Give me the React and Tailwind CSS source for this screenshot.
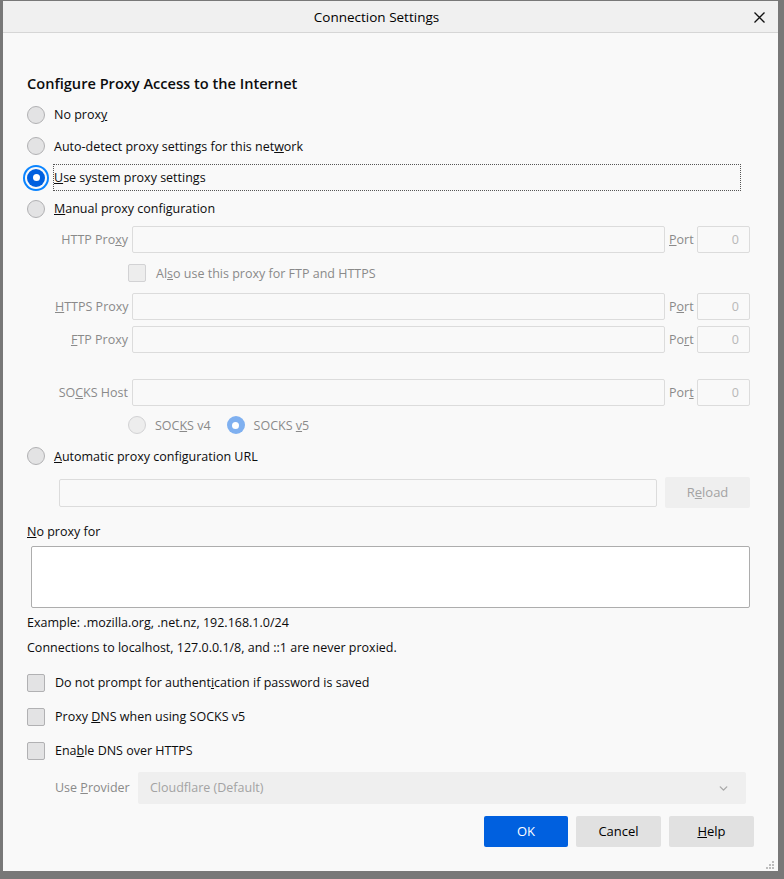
import { ChevronDown } from 'lucide-react';

const font = { fontFamily: '"Open Sans", "Noto Sans", sans-serif' };

function Radio({ checked, disabled, focused }) {
  if (checked && focused) {
    return (
      <div className="w-[18px] h-[18px] shrink-0 rounded-full bg-[#0060df] flex items-center justify-center shadow-[0_0_0_2px_#f9f9f9,0_0_0_4px_#0a84ff]">
        <div className="w-[7px] h-[7px] rounded-full bg-white" />
      </div>
    );
  }
  if (checked) {
    return (
      <div className={`w-[18px] h-[18px] shrink-0 rounded-full flex items-center justify-center ${disabled ? 'bg-[#7fb0f0]' : 'bg-[#0060df]'}`}>
        <div className="w-[7px] h-[7px] rounded-full bg-white" />
      </div>
    );
  }
  return (
    <div className={`w-[18px] h-[18px] shrink-0 rounded-full border ${disabled ? 'border-[#d2d2d4] bg-[#ededed]' : 'border-[#b1b1b3] bg-[#e3e3e4]'}`} />
  );
}

function Checkbox({ disabled }) {
  return (
    <div className={`w-[18px] h-[18px] shrink-0 rounded-[2px] border ${disabled ? 'border-[#d2d2d4] bg-[#ededed]' : 'border-[#b1b1b3] bg-[#e3e3e4]'}`} />
  );
}

function ProxyRow({ label, port, className = '' }) {
  return (
    <div className={`flex items-center h-[27px] ${className}`}>
      <div className="w-[73px] ml-[28px] pt-[2px] text-right text-[#8a8a8a] whitespace-nowrap">{label}</div>
      <div className="ml-[4px] w-[533px] h-[27px] border border-[#dcdcdc] rounded-[2px] bg-[#f9f9f9]" />
      <div className="ml-[4px] w-[28px] pt-[2px] text-[#8a8a8a]">{port}</div>
      <div className="w-[53px] h-[27px] border border-[#dcdcdc] rounded-[2px] flex items-center justify-end pr-[10px] pt-[1px] text-[#b8b8b8]">0</div>
    </div>
  );
}

export default function App() {
  return (
    <div className="w-[784px] h-[879px] bg-[#787878] overflow-hidden text-[12.5px] text-[#0c0c0d]" style={font}>
      <div className="ml-[3px] mt-[1px] w-[775px] h-[870px] bg-[#f9f9f9] flex flex-col relative">

        {/* title bar */}
        <div className="h-[32px] shrink-0 bg-[#f0f0f0] border-b border-[#d6d6d6] flex items-center justify-center pr-[28px] relative">
          <span className="text-[13.5px] text-black pt-[1px]">Connection Settings</span>
          <svg className="absolute right-[13px] top-[11px]" width="11" height="11" viewBox="0 0 11 11">
            <path d="M0.5 0.5 L10.5 10.5 M10.5 0.5 L0.5 10.5" stroke="#111" strokeWidth="1.3" />
          </svg>
        </div>

        <div className="flex flex-col pl-[24px] pr-[24px]">
          <div className="mt-[41px] h-[20px] flex items-center text-[14.6px] font-semibold">Configure Proxy Access to the Internet</div>

          <div className="mt-[5px] h-[31px] flex items-center gap-[9px]">
            <Radio />
            <span className="pt-[2px]">No prox<u>y</u></span>
          </div>
          <div className="h-[32px] flex items-center gap-[9px]">
            <Radio />
            <span className="pt-[2px]">Auto-detect proxy settings for this net<u>w</u>ork</span>
          </div>
          <div className="h-[31px] flex items-center gap-[8px]">
            <Radio checked focused />
            <div className="flex-1 mr-[13px] h-[27px] border border-dotted border-[#555] flex items-center">
              <span className="pt-[2px]"><u>U</u>se system proxy settings</span>
            </div>
          </div>
          <div className="h-[31px] flex items-center gap-[9px]">
            <Radio />
            <span className="pt-[2px]"><u>M</u>anual proxy configuration</span>
          </div>

          <ProxyRow className="mt-[2px]" label={<>HTTP Pro<u>x</u>y</>} port={<><u>P</u>ort</>} />

          <div className="h-[40px] flex items-center pl-[101px] gap-[10px] text-[#8a8a8a]">
            <Checkbox disabled />
            <span className="pt-[2px]">Al<u>s</u>o use this proxy for FTP and HTTPS</span>
          </div>

          <ProxyRow label={<><u>H</u>TTPS Proxy</>} port={<>P<u>o</u>rt</>} />
          <ProxyRow className="mt-[6px]" label={<><u>F</u>TP Proxy</>} port={<>Po<u>r</u>t</>} />
          <ProxyRow className="mt-[26px]" label={<>SO<u>C</u>KS Host</>} port={<>Por<u>t</u></>} />

          <div className="mt-[3px] h-[32px] flex items-center pl-[101px] text-[#8a8a8a]">
            <Radio disabled />
            <span className="ml-[9px] pt-[2px]">SOC<u>K</u>S v4</span>
            <div className="ml-[16px]"><Radio checked disabled /></div>
            <span className="ml-[9px] pt-[2px]">SOCKS <u>v</u>5</span>
          </div>

          <div className="h-[30px] flex items-center gap-[9px]">
            <Radio />
            <span className="pt-[2px]"><u>A</u>utomatic proxy configuration URL</span>
          </div>

          <div className="mt-[6px] h-[31px] flex items-center pl-[32px]">
            <div className="w-[598px] h-[28px] border border-[#dcdcdc] rounded-[2px]" />
            <div className="ml-[8px] w-[85px] h-[31px] rounded-[2px] bg-[#efefef] flex items-center justify-center pt-[1px] text-[#a3a3a3] text-[13px]">R<u>e</u>load</div>
          </div>

          <div className="mt-[14px] h-[20px] flex items-center"><span className="pt-[1px]"><u>N</u>o proxy for</span></div>

          <div className="mt-[4px] ml-[4px] w-[719px] h-[62px] bg-white border border-[#adadad] rounded-[2px]" />

          <div className="mt-[6px] h-[18px] flex items-center pt-[1px]">Example: .mozilla.org, .net.nz, 192.168.1.0/24</div>
          <div className="mt-[7px] h-[18px] flex items-center pt-[1px]">Connections to localhost, 127.0.0.1/8, and ::1 are never proxied.</div>

          <div className="mt-[9px] h-[34px] flex items-center gap-[10px]">
            <Checkbox />
            <span className="pt-[1px]">Do not prompt for authent<u>i</u>cation if password is saved</span>
          </div>
          <div className="h-[34px] flex items-center gap-[10px]">
            <Checkbox />
            <span className="pt-[1px]">Proxy <u>D</u>NS when using SOCKS v5</span>
          </div>
          <div className="h-[34px] flex items-center gap-[10px]">
            <Checkbox />
            <span className="pt-[1px]">Ena<u>b</u>le DNS over HTTPS</span>
          </div>

          <div className="mt-[4px] h-[32px] flex items-center pl-[28px]">
            <span className="w-[83px] pt-[1px] text-[#8a8a8a]">Use <u>P</u>rovider</span>
            <div className="w-[608px] h-[32px] rounded-[2px] bg-[#efefef] flex items-center justify-between pl-[12px] pr-[16px] text-[#a3a3a3]">
              <span className="pt-[1px]">Cloudflare (Default)</span>
              <ChevronDown size={13} strokeWidth={2.5} className="text-[#a8a8a8]" />
            </div>
          </div>

          <div className="mt-[12px] h-[31px] flex justify-end gap-[8px] text-[13px]">
            <button className="w-[84px] h-[31px] rounded-[2px] bg-[#0060df] text-white pt-[1px]">OK</button>
            <button className="w-[85px] h-[31px] rounded-[2px] bg-[#e1e1e1] text-black pt-[1px]">Cancel</button>
            <button className="w-[85px] h-[31px] rounded-[2px] bg-[#e1e1e1] text-black pt-[1px]"><u>H</u>elp</button>
          </div>
        </div>

        {/* resize grip */}
        <svg className="absolute right-[3px] bottom-[1px]" width="10" height="10" viewBox="0 0 10 10">
          <rect x="7" y="1" width="2" height="2" fill="#bdbdbd" />
          <rect x="4" y="4" width="2" height="2" fill="#bdbdbd" />
          <rect x="7" y="4" width="2" height="2" fill="#bdbdbd" />
          <rect x="1" y="7" width="2" height="2" fill="#bdbdbd" />
          <rect x="4" y="7" width="2" height="2" fill="#bdbdbd" />
          <rect x="7" y="7" width="2" height="2" fill="#bdbdbd" />
        </svg>
      </div>
    </div>
  );
}
